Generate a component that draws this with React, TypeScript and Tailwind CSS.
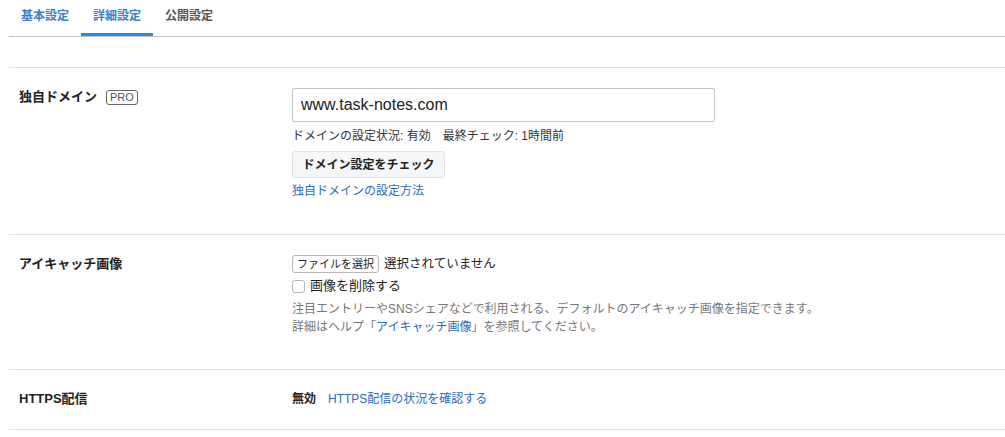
const font = "font-['Liberation_Sans','Noto_Sans_CJK_JP',sans-serif]"

const Tabs = () => {
  const tabs = [
    { label: '基本設定', active: false, color: 'text-[#3a7fc9]' },
    { label: '詳細設定', active: true, color: 'text-[#3a7fc9]' },
    { label: '公開設定', active: false, color: 'text-[#555]' },
  ]
  return (
    <div className="ml-[9px] flex border-b border-[#b8c4cc]">
      {tabs.map((tab) => (
        <div
          key={tab.label}
          className={`flex h-[36px] w-[72px] items-center justify-center border-b-[3px] pb-[1px] text-[12px] font-bold ${tab.color} ${
            tab.active ? 'border-[#2b8ad8]' : 'border-transparent'
          }`}
        >
          {tab.label}
        </div>
      ))}
    </div>
  )
}

const Row = ({
  label,
  badge,
  children,
  className,
}: {
  label: string
  badge?: string
  children: React.ReactNode
  className: string
}) => (
  <div className={`flex border-b border-[#dde3e6] pl-[10px] ${className}`}>
    <div className="flex h-[20px] w-[273px] shrink-0 items-center gap-[9px] text-[13px] font-bold text-[#222]">
      <span>{label}</span>
      {badge && (
        <span className="flex h-[15px] items-center rounded-[3px] border border-[#666] px-[3px] text-[11px] font-normal text-[#555]">
          {badge}
        </span>
      )}
    </div>
    <div className="flex flex-col">{children}</div>
  </div>
)

export default function App() {
  return (
    <div className={`min-h-[437px] w-[1005px] bg-white ${font}`}>
      <Tabs />
      <div className="mt-[30px] ml-[9px] border-t border-[#dde3e6]">
        <Row label="独自ドメイン" badge="PRO" className="pt-[19px] pb-[34px]">
          <input
            type="text"
            defaultValue="www.task-notes.com"
            className="mt-[1px] h-[34px] w-[423px] rounded-[2px] border border-[#b9c7d0] px-[8px] text-[16px] text-[#222] outline-none"
          />
          <div className="mt-[5px] flex h-[18px] items-center text-[12px] text-[#333]">
            <span>ドメインの設定状況: 有効</span>
            <span className="ml-[12px]">最終チェック: 1時間前</span>
          </div>
          <button className="mt-[6px] h-[27px] w-[153px] rounded-[3px] border border-[#dfe3e6] bg-[#f5f6f7] text-[12px] font-bold text-[#222]">
            ドメイン設定をチェック
          </button>
          <a className="mt-[4px] flex h-[18px] items-center text-[12px] text-[#2a6cbf]" href="#">
            独自ドメインの設定方法
          </a>
        </Row>
        <Row label="アイキャッチ画像" className="pt-[19px] pb-[33px]">
          <div className="mt-[1px] flex h-[18px] items-center text-[12.5px] text-[#222]">
            <button className="flex h-[18px] w-[87px] items-center justify-center rounded-[3px] border border-[#b8b8b8] bg-white text-[11px] text-[#222]">
              ファイルを選択
            </button>
            <span className="ml-[5px]">選択されていません</span>
          </div>
          <label className="mt-[4px] flex h-[18px] items-center gap-[5px] text-[13px] text-[#222]">
            <span className="h-[13px] w-[13px] rounded-[3px] border border-[#b8b8b8] bg-white" />
            画像を削除する
          </label>
          <div className="mt-[5px] text-[12px] leading-[18px] text-[#777]">
            <div>注目エントリーやSNSシェアなどで利用される、デフォルトのアイキャッチ画像を指定できます。</div>
            <div>
              詳細はヘルプ「<a className="text-[#2a6cbf]" href="#">アイキャッチ画像</a>」を参照してください。
            </div>
          </div>
        </Row>
        <Row label="HTTPS配信" className="pt-[19px] pb-[20px]">
          <div className="flex h-[20px] items-center text-[12px]">
            <span className="font-bold text-[#222]">無効</span>
            <a className="ml-[12px] text-[#2a6cbf]" href="#">
              HTTPS配信の状況を確認する
            </a>
          </div>
        </Row>
      </div>
    </div>
  )
}
